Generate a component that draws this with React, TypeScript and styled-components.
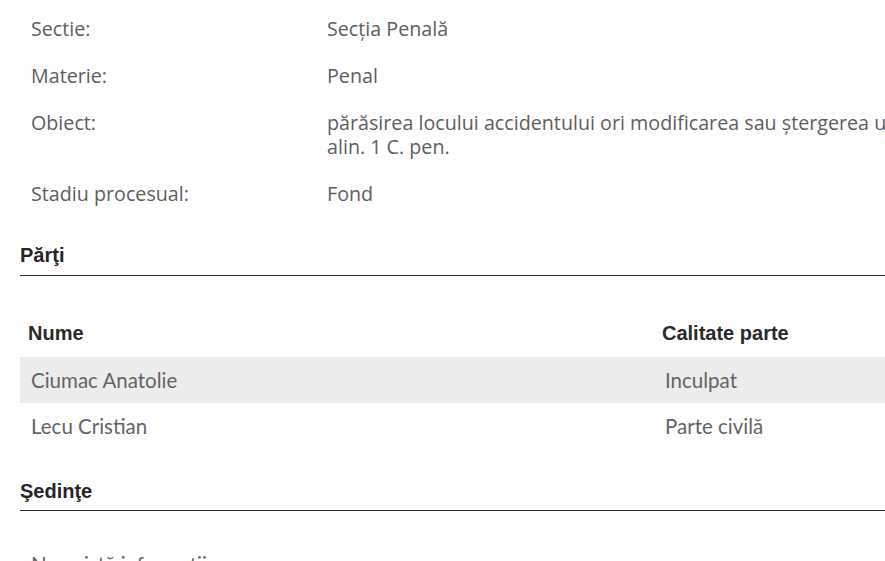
import React from "react";
import styled, { createGlobalStyle } from "styled-components";

const Global = createGlobalStyle`
  html, body {
    margin: 0;
    padding: 0;
    background: #ffffff;
    overflow: hidden;
  }
`;

const Page = styled.div`
  width: 1180px;
  padding: 5px 0 0 20px;
`;

const Details = styled.dl`
  margin: 0;
  display: grid;
  grid-template-columns: 307px 1fr;
  font-family: "Open Sans", "DejaVu Sans", sans-serif;
  font-size: 19.7px;
  line-height: 24px;
  color: #5e5e5e;
`;

const Label = styled.dt`
  margin: 0;
  padding: 11.5px 0 11.5px 11px;
`;

const Value = styled.dd`
  margin: 0;
  padding: 11.5px 0;
  white-space: nowrap;
`;

const SectionTitle = styled.h3<{ $top: number }>`
  margin: ${(p) => p.$top}px 0 0 0;
  padding: 0 0 7.5px 0;
  font-family: "Liberation Sans", Arial, sans-serif;
  font-weight: bold;
  font-size: 20px;
  line-height: 23px;
  color: #262626;
  border-bottom: 1px solid #2b2b2b;
`;

const Table = styled.div`
  margin-top: 34px;
  display: grid;
  grid-template-columns: 634px 1fr;
`;

const HeadCell = styled.div`
  padding: 0 8px;
  height: 47px;
  display: flex;
  align-items: center;
  font-family: "Liberation Sans", Arial, sans-serif;
  font-weight: bold;
  font-size: 20px;
  color: #2a2a2a;
`;

const Cell = styled.div<{ $shade: boolean }>`
  padding: 0 11px;
  height: 46px;
  display: flex;
  align-items: center;
  font-family: Lato, "Open Sans", sans-serif;
  font-size: 20.5px;
  color: #646464;
  background: ${(p) => (p.$shade ? "#ececec" : "transparent")};
`;

const Empty = styled.p`
  margin: 41px 0 0 0;
  padding-left: 11px;
  font-family: Lato, "Open Sans", sans-serif;
  font-size: 20.5px;
  line-height: 24px;
  color: #646464;
`;

const details: [string, React.ReactNode][] = [
  ["Sectie:", "Secția Penală"],
  ["Materie:", "Penal"],
  [
    "Obiect:",
    <>
      părăsirea locului accidentului ori modificarea sau ștergerea urmelor (art. 338
      <br />
      alin. 1 C. pen.
    </>,
  ],
  ["Stadiu procesual:", "Fond"],
];

const parties = [
  ["Ciumac Anatolie", "Inculpat"],
  ["Lecu Cristian", "Parte civilă"],
];

export default function App() {
  return (
    <Page>
      <Global />
      <Details>
        {details.map(([l, v]) => (
          <React.Fragment key={l}>
            <Label>{l}</Label>
            <Value>{v}</Value>
          </React.Fragment>
        ))}
      </Details>
      <SectionTitle $top={27}>Părţi</SectionTitle>
      <Table>
        <HeadCell>Nume</HeadCell>
        <HeadCell>Calitate parte</HeadCell>
        {parties.map(([n, c], i) => (
          <React.Fragment key={n}>
            <Cell $shade={i % 2 === 0}>{n}</Cell>
            <Cell $shade={i % 2 === 0}>{c}</Cell>
          </React.Fragment>
        ))}
      </Table>
      <SectionTitle $top={31}>Şedinţe</SectionTitle>
      <Empty>Nu există informaţii</Empty>
    </Page>
  );
}
